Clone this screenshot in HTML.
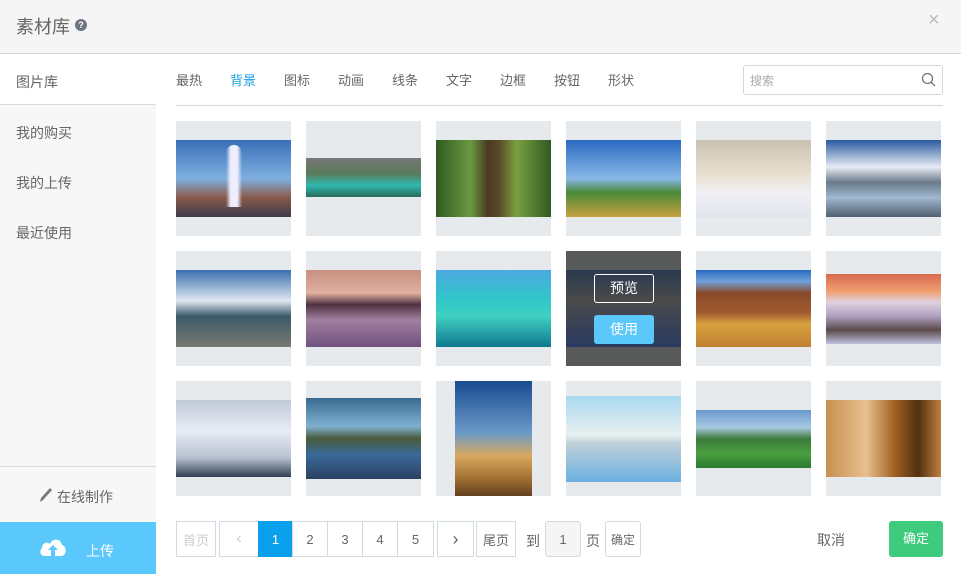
<!DOCTYPE html>
<html><head><meta charset="utf-8"><style>
*{margin:0;padding:0;box-sizing:border-box}
body{width:961px;height:574px;overflow:hidden;background:#fff;font-family:"Liberation Sans","Noto Sans CJK SC",sans-serif;color:#555;position:relative}
.abs{position:absolute}
.hdr{left:0;top:0;width:961px;height:54px;background:#f5f5f5;border-bottom:1px solid #cfd7df}
.side{left:0;top:55px;width:156px;height:519px;background:#f7f7f7}
.si{position:absolute;left:16px;font-size:14px;color:#666}
.tab{position:absolute;top:70px;font-size:13px;color:#666}
.cell{position:absolute;width:115px;height:115px;background:#e6eaed}
.im{position:absolute}
.pb{position:absolute;top:521px;height:36px;border:1px solid #d3dbe2;font-size:13px;color:#666;display:flex;align-items:center;justify-content:center;background:#fff}
</style></head><body>
<div class="abs hdr"></div>
<div class="abs" style="left:16px;top:13px;font-size:18px;color:#666">素材库</div>
<div class="abs" style="left:75px;top:19px;width:12px;height:12px;border-radius:50%;background:#6c7580;color:#fff;font-size:9px;font-weight:bold;text-align:center;line-height:12px">?</div>
<div class="abs" style="left:928px;top:9px;font-size:20px;color:#bbb">×</div>

<div class="abs side"></div>
<div class="abs" style="left:0;top:55px;width:156px;height:50px;background:#fff;border-bottom:1px solid #d5dbe1"></div>
<div class="si" style="top:72px">图片库</div>
<div class="si" style="top:123px">我的购买</div>
<div class="si" style="top:173px">我的上传</div>
<div class="si" style="top:223px">最近使用</div>
<div class="abs" style="left:0;top:466px;width:156px;border-top:1px solid #d5dbe1"></div>
<svg class="abs" style="left:39px;top:487px" width="14" height="16" viewBox="0 0 14 16"><path d="M1 15 L2 11 L11 1 L13 3 L4 13 Z" fill="#777"/></svg>
<div class="abs" style="left:57px;top:487px;font-size:14px;color:#666">在线制作</div>
<div class="abs" style="left:0;top:522px;width:156px;height:52px;background:#5bc8fb"></div>
<svg class="abs" style="left:38px;top:536px" width="30" height="22" viewBox="0 0 30 22"><path d="M7 20 C2 20 1 15 4 12 C4 7 9 5 12 8 C14 2 23 2 24 9 C29 10 29 20 23 20 Z" fill="#fff"/><path d="M15 9 L10 14 H13 V20 H17 V14 H20 Z" fill="#5bc8fb"/></svg>
<div class="abs" style="left:86px;top:541px;font-size:14px;color:#fff">上传</div>

<div class="tab" style="left:176px">最热</div>
<div class="tab" style="left:230px;color:#1ba0e1">背景</div>
<div class="tab" style="left:284px">图标</div>
<div class="tab" style="left:338px">动画</div>
<div class="tab" style="left:392px">线条</div>
<div class="tab" style="left:446px">文字</div>
<div class="tab" style="left:500px">边框</div>
<div class="tab" style="left:554px">按钮</div>
<div class="tab" style="left:608px">形状</div>
<div class="abs" style="left:743px;top:65px;width:200px;height:30px;border:1px solid #cfd7df;border-radius:3px"></div>
<div class="abs" style="left:750px;top:72px;font-size:12px;color:#aaa">搜索</div>
<svg class="abs" style="left:921px;top:72px" width="15" height="15" viewBox="0 0 15 15"><circle cx="6.5" cy="6.5" r="5" fill="none" stroke="#777" stroke-width="1.3"/><path d="M10 10 L14 14" stroke="#777" stroke-width="1.3"/></svg>
<div class="abs" style="left:176px;top:105px;width:767px;border-top:1px solid #cfd7df"></div>

<!-- row1 -->
<div class="cell" style="left:176px;top:121px"><div class="im" style="left:0;top:19px;width:115px;height:77px;background:linear-gradient(#3a6fb8,#7fb0e0 50%,#8a5a4a 75%,#3a3a4a)"></div><div class="im" style="left:50px;top:24px;width:16px;height:62px;background:linear-gradient(90deg,transparent,#eef 30%,#eef 70%,transparent);border-radius:8px 8px 0 0"></div></div>
<div class="cell" style="left:306px;top:121px"><div class="im" style="left:0;top:37px;width:115px;height:39px;background:linear-gradient(#777,#5a7a5a 40%,#2fb8b0 70%,#2a6a5a)"></div></div>
<div class="cell" style="left:436px;top:121px"><div class="im" style="left:0;top:19px;width:115px;height:77px;background:linear-gradient(90deg,#2f5a20,#6a9a40 30%,#4a3a20 45%,#5a4a2a 55%,#7aa040 70%,#2f5a20)"></div></div>
<div class="cell" style="left:566px;top:121px"><div class="im" style="left:0;top:19px;width:115px;height:77px;background:linear-gradient(#2a6ac0,#8ab8e8 50%,#4a8a3a 68%,#c8a040)"></div></div>
<div class="cell" style="left:696px;top:121px"><div class="im" style="left:0;top:19px;width:115px;height:77px;background:linear-gradient(#c8c0b0,#e8e0d0 45%,#f0f0f5 70%,#e0e4ec)"></div></div>
<div class="cell" style="left:826px;top:121px"><div class="im" style="left:0;top:19px;width:115px;height:77px;background:linear-gradient(#2a5aa0,#e8ecf4 35%,#6a7a8a 55%,#a0b8d0 75%,#506070)"></div></div>
<!-- row2 -->
<div class="cell" style="left:176px;top:251px"><div class="im" style="left:0;top:19px;width:115px;height:77px;background:linear-gradient(#3a70b0,#dfe8f0 40%,#3a5a6a 60%,#7a7a70)"></div></div>
<div class="cell" style="left:306px;top:251px"><div class="im" style="left:0;top:19px;width:115px;height:77px;background:linear-gradient(#c89080,#e0b0a0 30%,#503040 45%,#a080a0 65%,#705080)"></div></div>
<div class="cell" style="left:436px;top:251px"><div class="im" style="left:0;top:19px;width:115px;height:77px;background:linear-gradient(#4aa8e0,#30c8c8 40%,#40d0c0 60%,#107890)"></div></div>
<div class="cell" style="left:566px;top:251px;background:#585a5a"><div class="im" style="left:0;top:19px;width:115px;height:77px;background:linear-gradient(#2a3a50,#4a4a4a 40%,#2a3a60)"></div>
<div class="im" style="left:28px;top:23px;width:60px;height:29px;border:1px solid #fff;border-radius:3px;color:#fff;font-size:14px;text-align:center;line-height:27px">预览</div>
<div class="im" style="left:28px;top:64px;width:60px;height:29px;background:#5bc8fb;border-radius:3px;color:#fff;font-size:14px;text-align:center;line-height:29px">使用</div></div>
<div class="cell" style="left:696px;top:251px"><div class="im" style="left:0;top:19px;width:115px;height:77px;background:linear-gradient(#2a6ac0,#70a0d8 15%,#8a4a28 30%,#a05a30 55%,#d8a040 70%,#c08030)"></div></div>
<div class="cell" style="left:826px;top:251px"><div class="im" style="left:0;top:23px;width:115px;height:70px;background:linear-gradient(#d86a50,#f0a070 25%,#e0d0e0 40%,#b0a0c0 60%,#5a4a4a 80%,#c0c0e0)"></div></div>
<!-- row3 -->
<div class="cell" style="left:176px;top:381px"><div class="im" style="left:0;top:19px;width:115px;height:77px;background:linear-gradient(#c0c8d8,#e8ecf4 40%,#b8c0d0 75%,#304050)"></div></div>
<div class="cell" style="left:306px;top:381px"><div class="im" style="left:0;top:17px;width:115px;height:81px;background:linear-gradient(#3a6a90,#80b0d0 35%,#4a5a3a 50%,#3a6a9a 70%,#2a4060)"></div></div>
<div class="cell" style="left:436px;top:381px"><div class="im" style="left:19px;top:0;width:77px;height:115px;background:linear-gradient(#1a4a90,#6a9ac8 45%,#d8a860 65%,#a07030 85%,#604020)"></div></div>
<div class="cell" style="left:566px;top:381px"><div class="im" style="left:0;top:15px;width:115px;height:86px;background:linear-gradient(#a8d8f0,#e8f0f0 45%,#c0d0d8 55%,#6ab0e0)"></div></div>
<div class="cell" style="left:696px;top:381px"><div class="im" style="left:0;top:29px;width:115px;height:58px;background:linear-gradient(#6a9ad0,#a8c8e0 30%,#3a7a3a 50%,#4aa040 75%,#2a7a30)"></div></div>
<div class="cell" style="left:826px;top:381px"><div class="im" style="left:0;top:19px;width:115px;height:77px;background:linear-gradient(90deg,#c89050,#e8c090 35%,#a06020 60%,#503010 80%,#c08040)"></div></div>

<!-- pagination -->
<div class="pb" style="left:176px;width:40px;color:#ccc">首页</div>
<div class="pb" style="left:219px;width:40px;color:#ccc;font-size:16px">‹</div>
<div class="pb" style="left:258px;width:35px;background:#0aa0ec;border-color:#0aa0ec;color:#fff">1</div>
<div class="pb" style="left:292px;width:36px">2</div>
<div class="pb" style="left:327px;width:36px">3</div>
<div class="pb" style="left:362px;width:36px">4</div>
<div class="pb" style="left:397px;width:37px">5</div>
<div class="pb" style="left:437px;width:37px;font-size:18px">›</div>
<div class="pb" style="left:476px;width:40px">尾页</div>
<div class="abs" style="left:526px;top:531px;font-size:14px;color:#666">到</div>
<div class="pb" style="left:545px;width:36px;background:#f5f5f5;border-radius:3px">1</div>
<div class="abs" style="left:586px;top:531px;font-size:14px;color:#666">页</div>
<div class="pb" style="left:605px;width:36px;font-size:12px;border-radius:3px">确定</div>
<div class="abs" style="left:817px;top:530px;font-size:14px;color:#666">取消</div>
<div class="abs" style="left:889px;top:521px;width:54px;height:36px;background:#3ecb7e;border-radius:3px;color:#fff;font-size:13px;text-align:center;line-height:36px">确定</div>
</body></html>
